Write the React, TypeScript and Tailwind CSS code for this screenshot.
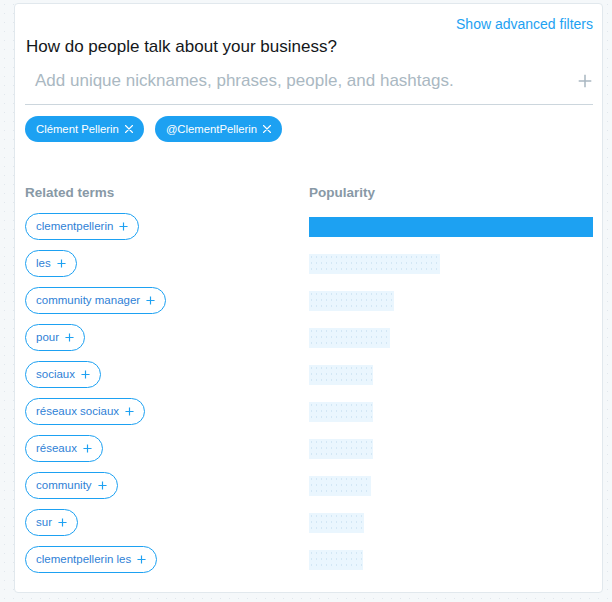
import React from "react";

const terms: { label: string; width: number }[] = [
  { label: "clementpellerin", width: 284 },
  { label: "les", width: 131 },
  { label: "community manager", width: 85 },
  { label: "pour", width: 81 },
  { label: "sociaux", width: 64 },
  { label: "réseaux sociaux", width: 64 },
  { label: "réseaux", width: 64 },
  { label: "community", width: 62 },
  { label: "sur", width: 55 },
  { label: "clementpellerin les", width: 54 },
];

function XIcon() {
  return (
    <svg width="8" height="8" viewBox="0 0 8 8" className="shrink-0">
      <path d="M0.5 0.5 L7.5 7.5 M7.5 0.5 L0.5 7.5" stroke="#ffffff" strokeWidth="1.1" strokeLinecap="round" />
    </svg>
  );
}

function PlusIcon({ size, color, stroke }: { size: number; color: string; stroke: number }) {
  return (
    <svg width={size} height={size} viewBox="0 0 10 10" className="shrink-0">
      <path d="M5 0.5 L5 9.5 M0.5 5 L9.5 5" stroke={color} strokeWidth={stroke} strokeLinecap="butt" />
    </svg>
  );
}

function BlueChip({ label }: { label: string }) {
  return (
    <div className="h-[26px] rounded-full bg-[#1da1f2] pl-[11px] pr-[11px] flex items-center gap-[6px] text-white text-[11.3px]">
      <span>{label}</span>
      <XIcon />
    </div>
  );
}

export default function App() {
  return (
    <div className="w-[612px] h-[602px] bg-[#f5f8fa] bg-[radial-gradient(circle,#e1e7ed_0.7px,transparent_1px)] bg-[length:9px_9px] pt-[3px] pl-[14px] font-['Liberation_Sans',Arial,sans-serif]">
      <div className="w-[589px] h-[590px] bg-white border border-[#e1e8ed] rounded-[4px] pt-[12px] pl-[10px] pr-[9px]">
        <div className="text-right text-[14px] leading-[16px] text-[#1da1f2]">Show advanced filters</div>
        <div className="mt-[5px] pl-[1px] text-[17px] leading-[20px] text-[#14171a]">
          How do people talk about your business?
        </div>
        <div className="mt-[14px] pb-[13px] border-b border-[#ccd6dd] flex items-center justify-between">
          <span className="pl-[10px] text-[17px] leading-[20px] text-[#aab8c2]">
            Add unique nicknames, phrases, people, and hashtags.
          </span>
          <span className="pr-[1px]">
            <PlusIcon size={14} color="#aab8c2" stroke={1.1} />
          </span>
        </div>
        <div className="mt-[11px] flex gap-[11px]">
          <BlueChip label="Clément Pellerin" />
          <BlueChip label="@ClementPellerin" />
        </div>
        <div className="mt-[43px] grid grid-cols-2 text-[13.5px] leading-[16px] font-bold text-[#8899a6]">
          <div>Related terms</div>
          <div>Popularity</div>
        </div>
        <div className="mt-[12px] flex flex-col gap-[10px]">
          {terms.map((t, i) => (
            <div key={t.label} className="grid grid-cols-2 items-center h-[27px]">
              <div className="flex">
                <div className="h-[27px] rounded-full border border-[#1da1f2] pl-[10px] pr-[10px] flex items-center gap-[6px] text-[11.5px] text-[#2f7fd6]">
                  <span>{t.label}</span>
                  <PlusIcon size={9} color="#1da1f2" stroke={1.3} />
                </div>
              </div>
              <div>
                {i === 0 ? (
                  <div className="h-[20px] bg-[#1da1f2]" style={{ width: t.width }} />
                ) : (
                  <div
                    className="h-[20px] bg-[#eaf6fe] bg-[radial-gradient(circle,#d3e7f5_0.5px,transparent_0.9px)] bg-[length:5px_6px]"
                    style={{ width: t.width }}
                  />
                )}
              </div>
            </div>
          ))}
        </div>
      </div>
    </div>
  );
}
